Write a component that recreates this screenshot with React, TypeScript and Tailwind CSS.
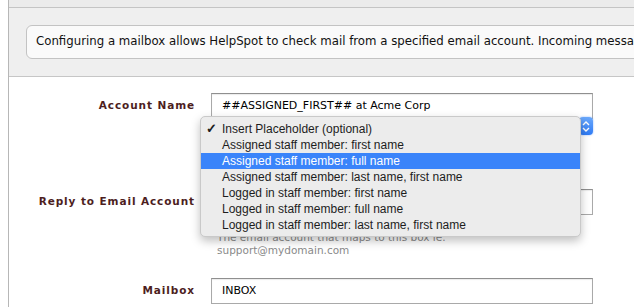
const placeholders = [
  "Insert Placeholder (optional)",
  "Assigned staff member: first name",
  "Assigned staff member: full name",
  "Assigned staff member: last name, first name",
  "Logged in staff member: first name",
  "Logged in staff member: full name",
  "Logged in staff member: last name, first name",
];

function Label({ children }: { children: React.ReactNode }) {
  return (
    <div className="flex items-center justify-end h-[26px] text-[10.5px] font-bold tracking-[0.9px] text-[#4d1e1e] whitespace-nowrap">
      {children}
    </div>
  );
}

function TextInput({ value }: { value: string }) {
  return (
    <div className="h-[26px] border border-[#a9a9a9] border-t-[#8f8f8f] bg-white flex items-center pl-[10px] text-[11px] text-black shadow-[inset_0_1px_1px_rgba(0,0,0,0.08)]">
      {value}
    </div>
  );
}

function PlaceholderMenu() {
  return (
    <div className="absolute left-[200px] top-[116px] w-[381px] h-[121px] rounded-[5px] bg-[#ececec] border border-[#c9c9c9] shadow-[0_4px_10px_rgba(0,0,0,0.25)] pt-[4px] font-['Liberation_Sans',sans-serif] text-[12px] text-[#1d1d1d]">
      {placeholders.map((p, i) => (
        <div
          key={p}
          className={
            i === 2
              ? "h-4 flex items-center bg-[#3a84fa] text-white"
              : "h-4 flex items-center"
          }
        >
          <span className="w-[21px] pl-[5px] text-[13px] font-bold">{i === 0 ? "✓" : ""}</span>
          <span>{p}</span>
        </div>
      ))}
    </div>
  );
}

export default function App() {
  return (
    <div className="relative w-[634px] h-[307px] overflow-hidden bg-white flex font-['DejaVu_Sans',sans-serif]">
      <div className="w-2 shrink-0" />
      <div className="flex-1 min-w-0 border-l border-[#b7b7b7]">
        <div className="h-[8px] bg-[#ebebeb] border-b border-[#c4c4c4]" />
        <div className="bg-[#efefef] border-b border-[#c6c6c6] py-[17px] pl-[17px] overflow-hidden">
          <div className="w-[700px] h-[34px] rounded-[6px] border border-[#c3c3c3] bg-[#fafafa] flex items-center pl-[9px] text-[11.75px] text-[#111] whitespace-nowrap overflow-hidden">
            Configuring a mailbox allows HelpSpot to check mail from a specified email account. Incoming messa
          </div>
        </div>

        <div className="grid grid-cols-[186px_382px] gap-x-4 pt-[16px]">
          <Label>Account Name</Label>
          <TextInput value="##ASSIGNED_FIRST## at Acme Corp" />

          <div />
          <div className="h-[18px] flex justify-end">
            <div className="w-[14px] h-[18px] -mt-[2px] rounded-[4px] bg-gradient-to-b from-[#6aa8fb] to-[#2f7bf5] flex items-center justify-center shadow-[0_0_2px_rgba(60,130,250,0.6)]">
              <svg width="8" height="11" viewBox="0 0 8 11" fill="none" stroke="white" strokeWidth="1.4">
                <path d="M1 4 L4 1 L7 4" />
                <path d="M1 7 L4 10 L7 7" />
              </svg>
            </div>
          </div>

          <div className="mt-[52px]">
            <Label>Reply to Email Account</Label>
          </div>
          <div className="mt-[52px]">
            <TextInput value="" />
            <div className="mt-4 ml-[6px] text-[10.5px] leading-[13px] text-[#8a8a8a]">
              The email account that maps to this box ie.
              <br />
              support@mydomain.com
            </div>
          </div>

          <div className="mt-[21px]">
            <Label>Mailbox</Label>
          </div>
          <div className="mt-[21px]">
            <TextInput value="INBOX" />
          </div>
        </div>
      </div>
      <PlaceholderMenu />
    </div>
  );
}
